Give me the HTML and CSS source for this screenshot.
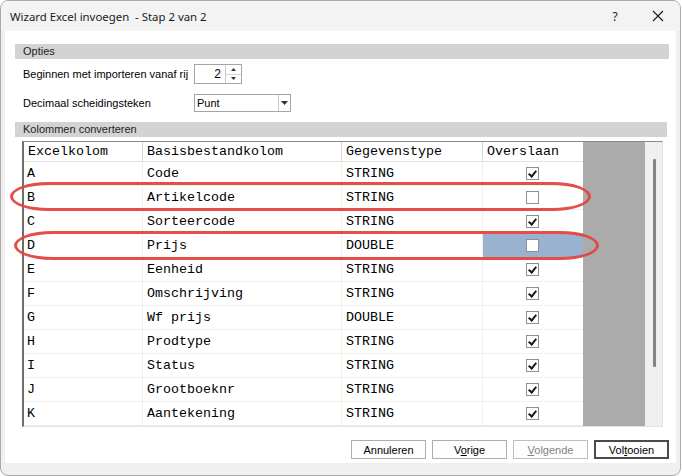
FILE: index.html
```html
<!DOCTYPE html>
<html>
<head>
<meta charset="utf-8">
<link rel="stylesheet" href="styles.css">
</head>
<body>
<div class="window">
  <div class="titlebar">
    <span class="title">Wizard Excel invoegen&nbsp; - Stap 2 van 2</span>
    <span class="help">?</span>
    <span class="close"><svg width="12" height="12" viewBox="0 0 12 12"><path d="M1 1 L11 11 M11 1 L1 11" stroke="#1a1a1a" stroke-width="1.1" fill="none"/></svg></span>
  </div>
  <div class="client">
    <div class="section">Opties</div>
    <div class="field spinrow">
      <span class="label">Beginnen met importeren vanaf rij</span>
      <div class="spin">
        <span class="spinval">2</span>
        <span class="spinbtns">
          <span class="sb"><svg width="5" height="3" viewBox="0 0 5 3"><path d="M0 3 L2.5 0 L5 3Z" fill="#333"/></svg></span>
          <span class="sb"><svg width="5" height="3" viewBox="0 0 5 3"><path d="M0 0 L2.5 3 L5 0Z" fill="#333"/></svg></span>
        </span>
      </div>
    </div>
    <div class="field comborow">
      <span class="label">Decimaal scheidingsteken</span>
      <div class="combo">
        <span class="comboval">Punt</span>
        <span class="combobtn"><svg width="7" height="4" viewBox="0 0 7 4"><path d="M0 0 L3.5 4 L7 0Z" fill="#333"/></svg></span>
      </div>
    </div>
    <div class="section s2">Kolommen converteren</div>
    <div class="grid">
      <div class="table">
        <div class="row head">
          <div class="c c1">Excelkolom</div><div class="c c2">Basisbestandkolom</div><div class="c c3">Gegevenstype</div><div class="c c4">Overslaan</div>
        </div>
        <div class="row"><div class="c c1">A</div><div class="c c2">Code</div><div class="c c3">STRING</div><div class="c c4"><span class="cb on"></span></div></div>
        <div class="row"><div class="c c1">B</div><div class="c c2">Artikelcode</div><div class="c c3">STRING</div><div class="c c4"><span class="cb"></span></div></div>
        <div class="row"><div class="c c1">C</div><div class="c c2">Sorteercode</div><div class="c c3">STRING</div><div class="c c4"><span class="cb on"></span></div></div>
        <div class="row"><div class="c c1">D</div><div class="c c2">Prijs</div><div class="c c3">DOUBLE</div><div class="c c4 sel"><span class="cb"></span></div></div>
        <div class="row"><div class="c c1">E</div><div class="c c2">Eenheid</div><div class="c c3">STRING</div><div class="c c4"><span class="cb on"></span></div></div>
        <div class="row"><div class="c c1">F</div><div class="c c2">Omschrijving</div><div class="c c3">STRING</div><div class="c c4"><span class="cb on"></span></div></div>
        <div class="row"><div class="c c1">G</div><div class="c c2">Wf prijs</div><div class="c c3">DOUBLE</div><div class="c c4"><span class="cb on"></span></div></div>
        <div class="row"><div class="c c1">H</div><div class="c c2">Prodtype</div><div class="c c3">STRING</div><div class="c c4"><span class="cb on"></span></div></div>
        <div class="row"><div class="c c1">I</div><div class="c c2">Status</div><div class="c c3">STRING</div><div class="c c4"><span class="cb on"></span></div></div>
        <div class="row"><div class="c c1">J</div><div class="c c2">Grootboeknr</div><div class="c c3">STRING</div><div class="c c4"><span class="cb on"></span></div></div>
        <div class="row"><div class="c c1">K</div><div class="c c2">Aantekening</div><div class="c c3">STRING</div><div class="c c4"><span class="cb on"></span></div></div>
      </div>
      <div class="fill"></div>
      <div class="vscroll"><span class="thumb"></span></div>
    </div>
    <div class="buttons">
      <button class="btn">Annuleren</button>
      <button class="btn">V<u>o</u>rige</button>
      <button class="btn disabled"><u>V</u>olgende</button>
      <button class="btn default">Vol<u>t</u>ooien</button>
    </div>
    <div class="mark mark-b"></div>
    <div class="mark mark-d"></div>
  </div>
  <div class="footer"></div>
</div>
</body>
</html>
```

FILE: styles.css
```css
* { box-sizing: border-box; }
html, body { margin: 0; padding: 0; background: #ffffff; }
body { width: 682px; height: 476px; overflow: hidden; }

.window {
  width: 681px;
  height: 476px;
  border: 1px solid #a9a9a9;
  border-radius: 8px;
  background: #f0f0f0;
  display: flex;
  flex-direction: column;
  overflow: hidden;
  font-family: "Liberation Sans", Arial, sans-serif;
  font-size: 11px;
  color: #000;
}

.titlebar {
  height: 30px;
  flex: none;
  background: #f3f3f3;
  display: flex;
  align-items: center;
  padding-left: 9px;
  font-family: "Noto Sans", "Open Sans", sans-serif;
  font-size: 11.4px;
  color: #1a1a1a;
}
.title { flex: 1; white-space: pre; }
.help { width: 12px; margin-right: 31px; text-align: center; font-size: 12px; }
.close { width: 12px; height: 12px; margin-right: 16px; display: flex; }

.client {
  position: relative;
  flex: none;
  height: 432px;
  margin: 0 4px;
  background: #ffffff;
  padding: 13px 7px 4px 10px;
  display: flex;
  flex-direction: column;
}

.section {
  height: 15px;
  background: #d3d3d3;
  padding-left: 8px;
  line-height: 15px;
  font-size: 11px;
  color: #1e1e1e;
}
.section.s2 { margin-top: 10px; margin-right: 2px; }

.field { display: flex; align-items: center; padding-left: 8px; }
.label { width: 171px; font-size: 11px; white-space: nowrap; }
.spinrow { margin-top: 5px; height: 20px; }
.comborow { margin-top: 10px; height: 18px; }

.spin {
  width: 48px;
  height: 20px;
  border: 1px solid #a5a5a5;
  display: flex;
}
.spinval { flex: 1; text-align: right; padding-right: 4px; font-size: 12px; line-height: 18px; }
.spinbtns { width: 16px; border-left: 1px solid #c8c8c8; display: flex; flex-direction: column; }
.sb { flex: 1; display: flex; align-items: center; justify-content: center; }
.sb + .sb { border-top: 1px solid #d6d6d6; }

.combo {
  width: 97px;
  height: 18px;
  border: 1px solid #a5a5a5;
  display: flex;
}
.comboval { flex: 1; padding-left: 2px; font-size: 11px; line-height: 16px; }
.combobtn { width: 12px; border-left: 1px solid #c8c8c8; display: flex; align-items: center; justify-content: center; }

.grid {
  margin-top: 4px;
  margin-left: 7px;
  width: 641px;
  height: 286px;
  flex: none;
  display: flex;
  border-top: 1px solid #8a8a8a;
  border-left: 2px solid #6f6f6f;
  border-right: 1px solid #e3e3e3;
  border-bottom: 1px solid #e3e3e3;
  background: #ababab;
  font-family: "Liberation Mono", "Courier New", monospace;
  font-size: 13.33px;
}
.table { width: 559px; background: #fff; display: flex; flex-direction: column; }
.row { display: flex; height: 24px; border-bottom: 1px solid #efefef; }
.row.head { height: 20px; border-bottom: 1px solid #e2e2e2; }
.c { display: flex; align-items: center; padding-left: 3px; white-space: pre; }
.c1 { width: 119px; border-right: 1px solid #efefef; }
.c2 { width: 199px; border-right: 1px solid #efefef; }
.c3 { width: 141px; border-right: 1px solid #efefef; }
.c4 { width: 100px; justify-content: center; padding-left: 0; }
.head .c { padding-left: 4px; }
.head .c1, .head .c2, .head .c3 { border-right: 1px solid #d8d8d8; }
.head .c4 { justify-content: flex-start; padding-left: 4px; }
.c2, .c3 { padding-left: 4px; }
.c4.sel { background: #99b2cf; }

.cb {
  width: 13px;
  height: 13px;
  border: 1px solid #8e8f8f;
  background: #fff;
  margin-left: -1px;
  position: relative;
}
.cb.on::after {
  content: "";
  position: absolute;
  left: 3px;
  top: 1px;
  width: 3px;
  height: 6px;
  border-right: 2px solid #1a1a1a;
  border-bottom: 2px solid #1a1a1a;
  transform: rotate(40deg);
}

.fill { flex: 1; }
.vscroll {
  width: 17px;
  background: #f0f0f0;
  position: relative;
}
.thumb {
  position: absolute;
  left: 8px;
  top: 17px;
  width: 3px;
  height: 208px;
  background: #858585;
  border-radius: 1px;
}

.buttons {
  margin-top: 13px;
  display: flex;
  justify-content: flex-end;
  gap: 6px;
}
.btn {
  width: 75px;
  height: 19px;
  padding: 0;
  border: 1px solid #adadad;
  background: #fdfdfd;
  font-family: "Liberation Sans", Arial, sans-serif;
  font-size: 11px;
  color: #000;
}
.btn.disabled { color: #838383; border-color: #bfbfbf; }
.btn.default { border: 2px solid #4a4a4a; }

.mark {
  position: absolute;
  border: 3px solid #e2443e;
  border-radius: 40px / 15px;
  opacity: 0.95;
}
.mark-b { left: 5px; top: 151px; width: 581px; height: 29px; }
.mark-d { left: 9px; top: 200px; width: 585px; height: 29px; }

.footer { flex: 1; }
```
